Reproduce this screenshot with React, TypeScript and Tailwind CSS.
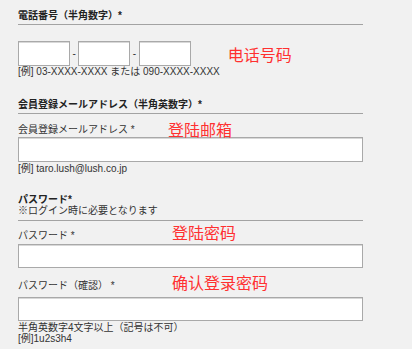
import React from "react";

const inputCls = "block bg-white border border-[#a9a9a9] shadow-[inset_0_1px_0_#d8d8d8]";
const note = "text-[#ff3030] text-[16px] leading-[16px] font-normal font-['Noto_Sans_CJK_SC',sans-serif]";

export default function App() {
  return (
    <div className="min-h-[349px] w-[412px] bg-[#f1f1f1] text-[#333] font-['Liberation_Sans','Noto_Sans_CJK_JP',sans-serif]">
      <div className="ml-[18px] w-[345px]">
        {/* 電話番号 */}
        <div className="pt-[9px] pb-[1px] border-b border-[#a3a3a3] text-[10px] font-bold leading-[14px] text-[#222]">
          電話番号（半角数字）*
        </div>
        <div className="mt-[16px] flex items-center h-[25px]">
          <input className={`${inputCls} w-[52px] h-[25px]`} />
          <span className="mx-[2.5px] text-[10px] leading-none">-</span>
          <input className={`${inputCls} w-[52px] h-[25px]`} />
          <span className="mx-[2.5px] text-[10px] leading-none">-</span>
          <input className={`${inputCls} w-[52px] h-[25px]`} />
          <span className={`${note} ml-[37px]`}>电话号码</span>
        </div>
        <p className="text-[10px] leading-[12px]">[例] 03-XXXX-XXXX または 090-XXXX-XXXX</p>

        {/* メールアドレス */}
        <div className="mt-[20px] pb-[1px] border-b border-[#a3a3a3] text-[10px] font-bold leading-[14px] text-[#222]">
          会員登録メールアドレス（半角英数字）*
        </div>
        <div className="mt-[7px] flex items-end">
          <span className="w-[150px] shrink-0 mb-[1px] text-[10px] leading-[12px]">会員登録メールアドレス *</span>
          <span className={note}>登陆邮箱</span>
        </div>
        <input className={`${inputCls} w-full h-[25px]`} />
        <p className="mt-[1px] text-[10px] leading-[12px]">[例] taro.lush@lush.co.jp</p>

        {/* パスワード */}
        <div className="mt-[20px] pb-[4px] border-b border-[#a3a3a3]">
          <div className="text-[10px] font-bold leading-[10px] text-[#222]">パスワード*</div>
          <div className="text-[10px] leading-[11px]">※ログイン時に必要となります</div>
        </div>
        <div className="mt-[3px] flex items-end">
          <span className="w-[154px] shrink-0 text-[10px] leading-[12px]">パスワード *</span>
          <span className={`${note} mb-[2px]`}>登陆密码</span>
        </div>
        <input type="password" className={`${inputCls} mt-[2px] w-full h-[24px]`} />
        <div className="mt-[6px] flex items-end">
          <span className="w-[154px] shrink-0 text-[10px] leading-[12px]">パスワード（確認） *</span>
          <span className={`${note} mb-[2px]`}>确认登录密码</span>
        </div>
        <input type="password" className={`${inputCls} mt-[5px] w-full h-[24px]`} />
        <p className="mt-[1px] text-[10px] leading-[11px]">半角英数字4文字以上（記号は不可）</p>
        <p className="text-[10px] leading-[11px]">[例]1u2s3h4</p>
      </div>
    </div>
  );
}
